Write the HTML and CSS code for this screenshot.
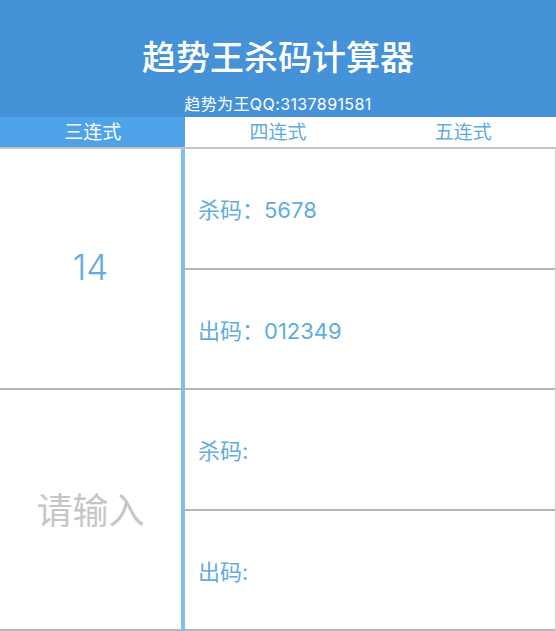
FILE: index.html
```html
<!DOCTYPE html>
<html>
<head>
  <title>趋势王杀码计算器</title>
  <meta charset='utf-8'>
  <meta name="viewport" content="width=device-width, initial-scale=1.0" />
  <link rel="stylesheet" href="styles.css">
</head>
<body>

<div class="header">
  <h1 class="title">趋势王杀码计算器</h1>
  <p class="sub">趋势为王QQ:3137891581</p>
</div>

<div class="tabs">
  <span class="tab on">三连式</span>
  <span class="tab">四连式</span>
  <span class="tab">五连式</span>
</div>

<div class="board">
  <div class="left">
    <div class="num">14</div>
    <div class="num empty">请输入</div>
  </div>
  <div class="right">
    <div class="cell">杀码：5678</div>
    <div class="cell">出码：012349</div>
    <div class="cell">杀码:</div>
    <div class="cell">出码:</div>
  </div>
</div>

</body>
</html>
```

FILE: styles.css
```css
body {
  font-family: Inter, "Noto Sans CJK SC", sans-serif;
  margin: 0;
  padding: 0;
  background: #fff;
  width: 556px;
  height: 631px;
  overflow: hidden;
}

h1, p {
  margin: 0;
}

.header {
  background: #4592d8;
  color: #fff;
  height: 117px;
  display: flex;
  flex-direction: column;
  align-items: center;
}

.title {
  font-size: 34px;
  font-weight: 500;
  line-height: 40px;
  margin-top: 38px;
}

.sub {
  font-size: 16px;
  letter-spacing: 0.4px;
  line-height: 20px;
  margin-top: 16px;
}

.tabs {
  display: flex;
  height: 30px;
  border-bottom: 2px solid #c4c4c4;
}

.tab {
  flex: 1;
  text-align: center;
  font-size: 19px;
  line-height: 32px;
  color: #62ace0;
}

.tab.on {
  background: #4ea2e8;
  color: #fff;
}

.board {
  display: flex;
  height: 482px;
}

.left {
  width: 181px;
  display: flex;
  flex-direction: column;
}

.num {
  flex: 1;
  display: flex;
  align-items: center;
  justify-content: center;
  font-size: 35px;
  font-weight: 300;
  color: #62ace0;
  border-bottom: 2px solid #b5b5b5;
  padding-bottom: 3px;
}

.num.empty {
  font-size: 36px;
  font-weight: 400;
  color: #c6c6c6;
}

.right {
  flex: 1;
  display: flex;
  flex-direction: column;
  border-left: 4px solid #7dc1e6;
  border-right: 1px solid #cfcfcf;
}

.cell {
  flex: 1;
  display: flex;
  align-items: center;
  padding-left: 13px;
  font-size: 22px;
  color: #62ace0;
  border-bottom: 2px solid #b5b5b5;
}
```
